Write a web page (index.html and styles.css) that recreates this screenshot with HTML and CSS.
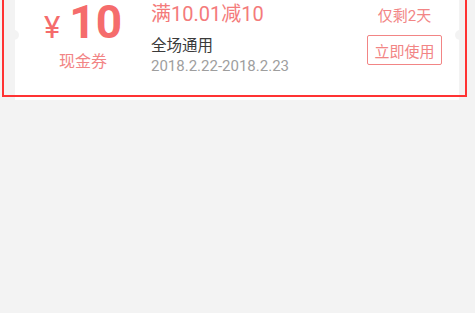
FILE: index.html
```html
<!DOCTYPE html>
<html lang="zh-CN">
<head>
  <meta charset="UTF-8">
  <title>优惠券</title>
  <link rel="stylesheet" href="styles.css">
</head>
<body>

<div class="list">
  <div class="coupon">
    <div class="coupon-left">
      <div class="amount"><span class="yen">¥</span>10</div>
      <div class="type">现金券</div>
    </div>
    <div class="coupon-mid">
      <div class="rule">满10.01减10</div>
      <div class="scope">全场通用</div>
      <div class="date">2018.2.22-2018.2.23</div>
    </div>
    <div class="coupon-right">
      <div class="left-days">仅剩2天</div>
      <button class="use-btn">立即使用</button>
    </div>
    <span class="notch notch-l"></span>
    <span class="notch notch-r"></span>
  </div>
  <div class="highlight"></div>
</div>

</body>
</html>
```

FILE: styles.css
```css
* { box-sizing: border-box; }

body {
  margin: 0;
  background: #f3f3f3;
  font-family: Roboto, "Noto Sans CJK SC", sans-serif;
  height: 313px;
  overflow: hidden;
}

.list {
  position: relative;
  padding: 0 16px 0 15px;
}

.coupon {
  position: relative;
  display: flex;
  height: 100px;
  background: #fff;
}

.coupon-left {
  width: 136px;
  display: flex;
  flex-direction: column;
  align-items: center;
  color: #f56c6c;
}

.amount {
  font-size: 46px;
  font-weight: bold;
  line-height: 44px;
}

.yen {
  font-size: 31px;
  font-weight: normal;
  margin-right: 9px;
}

.type {
  font-size: 16px;
  line-height: 20px;
  margin-top: 2px;
  color: #f28585;
}

.coupon-mid {
  flex: 1;
  padding-top: 2px;
}

.rule {
  font-size: 20px;
  line-height: 24px;
  color: #f47b7b;
}

.scope {
  font-size: 15.5px;
  line-height: 20px;
  margin-top: 10px;
  color: #3a3a3a;
}

.date {
  font-size: 15px;
  line-height: 20px;
  color: #9e9e9e;
}

.coupon-right {
  width: 100px;
  display: flex;
  flex-direction: column;
  align-items: center;
  padding-top: 6px;
  padding-right: 9px;
}

.left-days {
  font-size: 15px;
  line-height: 20px;
  color: #f28585;
}

.use-btn {
  margin-top: 9px;
  height: 30px;
  padding: 0 6px;
  border: 1px solid #f28585;
  border-radius: 2px;
  background: #fff;
  color: #f28585;
  font-family: inherit;
  font-size: 15px;
}

.notch {
  position: absolute;
  top: 30px;
  width: 8px;
  height: 10px;
  background: #f3f3f3;
}

.notch-l {
  left: -4px;
  border-radius: 0 5px 5px 0;
}

.notch-r {
  right: -4px;
  border-radius: 5px 0 0 5px;
}

.highlight {
  position: absolute;
  left: 2px;
  top: -2px;
  width: 465px;
  height: 99px;
  border: 2px solid #ff3333;
}
```
